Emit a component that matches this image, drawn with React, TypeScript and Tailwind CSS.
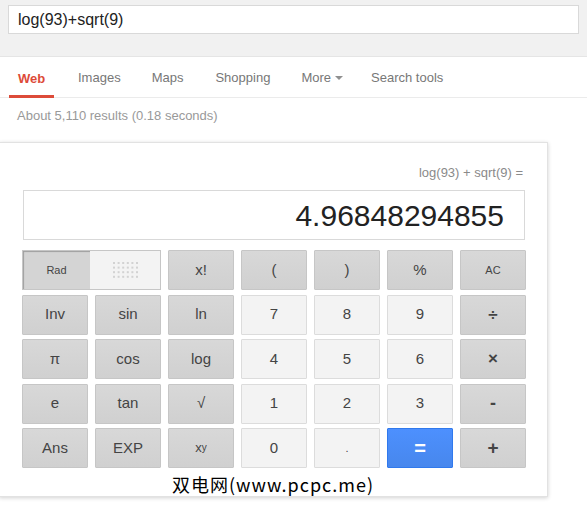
import React from 'react';

type Key = {
  label: React.ReactNode;
  kind: 'dark' | 'light' | 'blue';
  size?: string;
};

const keys: Key[] = [
  { label: 'x!', kind: 'dark' },
  { label: '(', kind: 'dark' },
  { label: ')', kind: 'dark' },
  { label: '%', kind: 'dark' },
  { label: 'AC', kind: 'dark', size: 'text-[11px]' },
  { label: 'Inv', kind: 'dark' },
  { label: 'sin', kind: 'dark' },
  { label: 'ln', kind: 'dark' },
  { label: '7', kind: 'light' },
  { label: '8', kind: 'light' },
  { label: '9', kind: 'light' },
  { label: '÷', kind: 'dark', size: 'text-[17px] font-bold' },
  { label: 'π', kind: 'dark' },
  { label: 'cos', kind: 'dark' },
  { label: 'log', kind: 'dark' },
  { label: '4', kind: 'light' },
  { label: '5', kind: 'light' },
  { label: '6', kind: 'light' },
  { label: '×', kind: 'dark', size: 'text-[17px] font-bold' },
  { label: 'e', kind: 'dark' },
  { label: 'tan', kind: 'dark' },
  { label: '√', kind: 'dark' },
  { label: '1', kind: 'light' },
  { label: '2', kind: 'light' },
  { label: '3', kind: 'light' },
  { label: '-', kind: 'dark', size: 'text-[18px] font-bold' },
  { label: 'Ans', kind: 'dark' },
  { label: 'EXP', kind: 'dark' },
  {
    label: (
      <span className="text-[13px]">
        x<sup className="text-[10px] relative -top-[1px]">y</sup>
      </span>
    ),
    kind: 'dark',
  },
  { label: '0', kind: 'light' },
  { label: '.', kind: 'light', size: 'text-[11px]' },
  { label: '=', kind: 'blue', size: 'text-[20px] font-bold' },
  { label: '+', kind: 'dark', size: 'text-[19px] font-bold' },
];

function DotGrid() {
  const dots = [];
  for (let r = 0; r < 4; r++) {
    for (let c = 0; c < 6; c++) {
      dots.push(<rect key={`${r}-${c}`} x={c * 4.6} y={r * 4.6} width="2" height="2" fill="#d2d2d2" />);
    }
  }
  return (
    <svg width="26" height="16" viewBox="0 0 26 16">
      {dots}
    </svg>
  );
}

function CalcKey({ k }: { k: Key }) {
  const styles = {
    dark: 'bg-gradient-to-b from-[#d8d8d8] to-[#d0d0d0] border-[#c6c6c6] text-[#444]',
    light: 'bg-[#f3f3f3] border-[#dcdcdc] text-[#444]',
    blue: 'bg-gradient-to-b from-[#4d90fe] to-[#4787ed] border-[#3079ed] text-white',
  }[k.kind];
  return (
    <div
      className={`h-[40px] border flex items-center justify-center rounded-[1px] ${styles} ${k.size ?? 'text-[15px]'}`}
    >
      {k.label}
    </div>
  );
}

export default function App() {
  const tabs = [
    { name: 'Images', ml: 'ml-[24px]' },
    { name: 'Maps', ml: 'ml-[31px]' },
    { name: 'Shopping', ml: 'ml-[32px]' },
    { name: 'More', ml: 'ml-[31px]', arrow: true },
    { name: 'Search tools', ml: 'ml-[28px]' },
  ];

  return (
    <div className="w-[587px] h-[508px] bg-white overflow-hidden font-['Liberation_Sans',Arial,sans-serif]">
      {/* search header */}
      <div className="h-[57px] bg-[#f1f1f1] border-b border-[#e5e5e5] pt-[5px] pl-[8px]">
        <div className="w-[571px] h-[29px] bg-white border border-[#d9d9d9] pl-[9px] text-[16px] leading-[27px] text-[#222]">
          log(93)+sqrt(9)
        </div>
      </div>

      {/* tabs */}
      <div className="h-[41px] border-b border-[#ebebeb] flex items-stretch text-[13px] text-[#777]">
        <div className="ml-[9px] w-[45px] flex items-center justify-center font-bold text-[#dd4b39] border-b-[3px] border-[#dd4b39] -mb-px pt-[5px]">
          Web
        </div>
        {tabs.map((t) => (
          <div key={t.name} className={`${t.ml} flex items-center pt-[2px]`}>
            {t.name}
            {t.arrow && (
              <span className="ml-[4px] w-0 h-0 border-l-[4px] border-r-[4px] border-t-[4px] border-l-transparent border-r-transparent border-t-[#909090]" />
            )}
          </div>
        ))}
      </div>

      <div className="pl-[17px] pt-[10px] text-[13px] leading-[16px] text-[#999]">
        About 5,110 results (0.18 seconds)
      </div>

      {/* calculator card */}
      <div className="relative mt-[18px] w-[549px] -ml-px bg-white border border-[#e2e2e2] shadow-[0_1px_4px_rgba(0,0,0,0.18)] pl-[23px] pr-[22px] pt-[22px] pb-[28px]">
        <div className="text-right pr-[2px] text-[13px] leading-[16px] text-[#8a8a8a]">
          log(93) + sqrt(9) =
        </div>
        <div className="mt-[9px] h-[50px] border border-[#d9d9d9] flex items-center justify-end pr-[20px] text-[30px] text-[#222]">
          4.96848294855
        </div>
        <div className="mt-[10px] -ml-px grid grid-cols-7 gap-x-[7px] gap-y-[4.5px] w-[504px]">
          <div className="col-span-2 h-[40px] border border-[#c6c6c6] flex">
            <div className="w-[67px] bg-[#d4d4d4] shadow-[inset_1px_1px_1px_rgba(0,0,0,0.25)] flex items-center justify-center text-[11px] text-[#444]">
              Rad
            </div>
            <div className="flex-1 bg-[#f3f3f3] flex items-center justify-center pl-[2px]">
              <DotGrid />
            </div>
          </div>
          {keys.map((k, i) => (
            <CalcKey key={i} k={k} />
          ))}
        </div>
        <div className="absolute left-[172px] top-[330px] text-[18px] leading-[22px] text-black font-['Noto_Sans_CJK_SC',sans-serif] tracking-[1px]">
          双电网(www.pcpc.me)
        </div>
      </div>
    </div>
  );
}
